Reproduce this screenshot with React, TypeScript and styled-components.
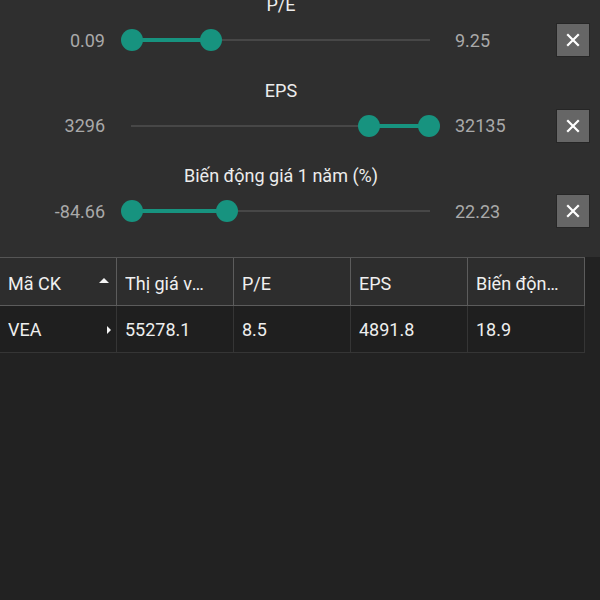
import React from "react";
import styled, { createGlobalStyle } from "styled-components";

const GlobalStyle = createGlobalStyle`
    html, body {
        margin: 0;
        padding: 0;
        background: #222222;
        font-family: Roboto, "Noto Sans", Arial, sans-serif;
        overflow: hidden;
    }
`;

const Screen = styled.div`
    width: 600px;
    height: 600px;
    background: #222222;
    overflow: hidden;
`;

const FilterPanel = styled.div`
    background: #2f2f2f;
    margin-top: -6px;
    padding-bottom: 30px;
    display: flex;
    flex-direction: column;
    gap: 23.5px;
`;

const FilterBlock = styled.div`
    display: flex;
    flex-direction: column;
    gap: 8px;
`;

const FilterTitle = styled.div`
    width: 320px;
    margin-left: 121px;
    text-align: center;
    color: #ececec;
    font-size: 18px;
    line-height: 22px;
`;

const FilterRow = styled.div`
    display: flex;
    align-items: center;
    height: 32px;
`;

const RangeValue = styled.div<{ $side: "left" | "right" }>`
    width: ${(p) => (p.$side === "left" ? "105px" : "102px")};
    margin-left: ${(p) => (p.$side === "left" ? "0" : "14px")};
    margin-right: ${(p) => (p.$side === "left" ? "16px" : "0")};
    text-align: ${(p) => (p.$side === "left" ? "right" : "left")};
    color: #a9a9a9;
    font-size: 18px;
`;

const Slider = styled.div`
    position: relative;
    width: 320px;
    height: 22px;
`;

const Track = styled.div`
    position: absolute;
    left: 10px;
    right: 11px;
    top: 10px;
    height: 2px;
    background: #474747;
`;

const Rail = styled.div`
    position: absolute;
    left: 11px;
    right: 11px;
    top: 0;
    bottom: 0;
`;

const ActiveTrack = styled.div`
    position: absolute;
    top: 9px;
    height: 4px;
    background: #17937f;
`;

const Thumb = styled.div`
    position: absolute;
    top: 0;
    width: 22px;
    height: 22px;
    margin-left: -11px;
    border-radius: 50%;
    background: #17937f;
`;

const ClearButton = styled.button`
    width: 32px;
    height: 32px;
    padding: 0;
    border: none;
    background: #666666;
    box-shadow: 0 0 0 1px #262626;
    display: flex;
    align-items: center;
    justify-content: center;
    cursor: pointer;
`;

const Table = styled.div`
    width: 585px;
    border-top: 1px solid #555555;
`;

const HeaderRow = styled.div`
    display: grid;
    grid-template-columns: repeat(5, 117px);
    height: 47px;
    background: #2d2d2d;
    border-bottom: 1px solid #5c5c5c;
`;

const HeaderCell = styled.div`
    display: flex;
    align-items: center;
    padding-left: 8px;
    padding-top: 3px;
    border-right: 1px solid #5c5c5c;
    color: #f0f0f0;
    font-size: 18px;
    min-width: 0;
`;

const DataRow = styled.div`
    display: grid;
    grid-template-columns: repeat(5, 117px);
    height: 46px;
    background: #1f1f1f;
    border-bottom: 1px solid #353535;
`;

const DataCell = styled(HeaderCell)`
    padding-top: 1px;
    border-right: 1px solid #353535;
    color: #eeeeee;
`;

const CellText = styled.span`
    flex: 1;
    min-width: 0;
    overflow: hidden;
    white-space: nowrap;
    text-overflow: ellipsis;
`;

const IconSlot = styled.span`
    width: 20px;
    flex: none;
    display: flex;
    align-items: center;
    justify-content: center;
    margin-right: 1px;
`;

const SortUp = styled.span`
    width: 0;
    height: 0;
    border-left: 5px solid transparent;
    border-right: 5px solid transparent;
    border-bottom: 5px solid #f4f4f4;
    margin-bottom: 6px;
    margin-right: 3px;
`;

const ExpandRight = styled.span`
    width: 0;
    height: 0;
    border-top: 4px solid transparent;
    border-bottom: 4px solid transparent;
    border-left: 4px solid #f4f4f4;
    margin-left: 7px;
`;

type Filter = { title: string; min: string; max: string; from: number; to: number };

const filters: Filter[] = [
    { title: "P/E", min: "0.09", max: "9.25", from: 0, to: 26.5 },
    { title: "EPS", min: "3296", max: "32135", from: 79.5, to: 99.7 },
    { title: "Biến động giá 1 năm (%)", min: "-84.66", max: "22.23", from: 0, to: 31.9 },
];

const headers = ["Mã CK", "Thị giá vốn hóa", "P/E", "EPS", "Biến động giá 1 năm"];
const row = ["VEA", "55278.1", "8.5", "4891.8", "18.9"];

function CloseIcon() {
    return (
        <svg width="14" height="14" viewBox="0 0 14 14">
            <path d="M2 2 L12 12 M12 2 L2 12" stroke="#ffffff" strokeWidth="2.2" strokeLinecap="square" />
        </svg>
    );
}

function RangeFilter({ f }: { f: Filter }) {
    return (
        <FilterBlock>
            <FilterTitle>{f.title}</FilterTitle>
            <FilterRow>
                <RangeValue $side="left">{f.min}</RangeValue>
                <Slider>
                    <Track />
                    <Rail>
                        <ActiveTrack style={{ left: `${f.from}%`, width: `${f.to - f.from}%` }} />
                        <Thumb style={{ left: `${f.from}%` }} />
                        <Thumb style={{ left: `${f.to}%` }} />
                    </Rail>
                </Slider>
                <RangeValue $side="right">{f.max}</RangeValue>
                <ClearButton>
                    <CloseIcon />
                </ClearButton>
            </FilterRow>
        </FilterBlock>
    );
}

export default function App() {
    return (
        <Screen>
            <GlobalStyle />
            <FilterPanel>
                {filters.map((f) => (
                    <RangeFilter key={f.title} f={f} />
                ))}
            </FilterPanel>
            <Table>
                <HeaderRow>
                    {headers.map((h, i) => (
                        <HeaderCell key={h}>
                            <CellText>{h}</CellText>
                            <IconSlot>{i === 0 && <SortUp />}</IconSlot>
                        </HeaderCell>
                    ))}
                </HeaderRow>
                <DataRow>
                    {row.map((v, i) => (
                        <DataCell key={i}>
                            <CellText>{v}</CellText>
                            <IconSlot>{i === 0 && <ExpandRight />}</IconSlot>
                        </DataCell>
                    ))}
                </DataRow>
            </Table>
        </Screen>
    );
}
